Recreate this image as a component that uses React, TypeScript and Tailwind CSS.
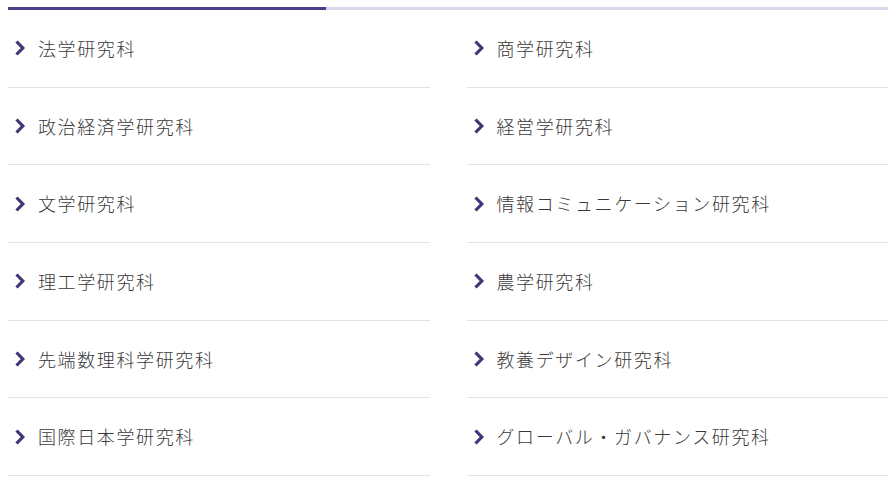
import React from 'react';

const leftItems = [
  '法学研究科',
  '政治経済学研究科',
  '文学研究科',
  '理工学研究科',
  '先端数理科学研究科',
  '国際日本学研究科',
];

const rightItems = [
  '商学研究科',
  '経営学研究科',
  '情報コミュニケーション研究科',
  '農学研究科',
  '教養デザイン研究科',
  'グローバル・ガバナンス研究科',
];

function Chevron() {
  return (
    <svg width="12" height="18" viewBox="0 0 12 18" className="shrink-0">
      <path d="M2.5 2.5 L8.8 9 L2.5 15.5" fill="none" stroke="#3f3677" strokeWidth="3.2" strokeLinejoin="miter" />
    </svg>
  );
}

function Row({ label }: { label: string }) {
  return (
    <a
      href="#"
      className="flex h-[77.7px] items-center gap-[12px] border-b border-[#e2e2e2] pl-[6px]"
    >
      <Chevron />
      <span className="text-[18px] font-light tracking-[0.09em] text-[#3a3a3a]">{label}</span>
    </a>
  );
}

export default function App() {
  return (
    <div
      className="min-h-[481px] bg-white pl-[8px] pr-[5px] pt-[7px]"
      style={{ fontFamily: '"Noto Sans CJK JP", "Noto Sans", sans-serif' }}
    >
      <div className="flex h-[3px] w-full">
        <div className="w-[318px] bg-[#4b3f8c]" />
        <div className="flex-1 bg-[#d9d6ea]" />
      </div>
      <div className="grid grid-cols-2 gap-x-[37px]">
        <div className="flex flex-col">
          {leftItems.map((item) => (
            <Row key={item} label={item} />
          ))}
        </div>
        <div className="flex flex-col">
          {rightItems.map((item) => (
            <Row key={item} label={item} />
          ))}
        </div>
      </div>
    </div>
  );
}
